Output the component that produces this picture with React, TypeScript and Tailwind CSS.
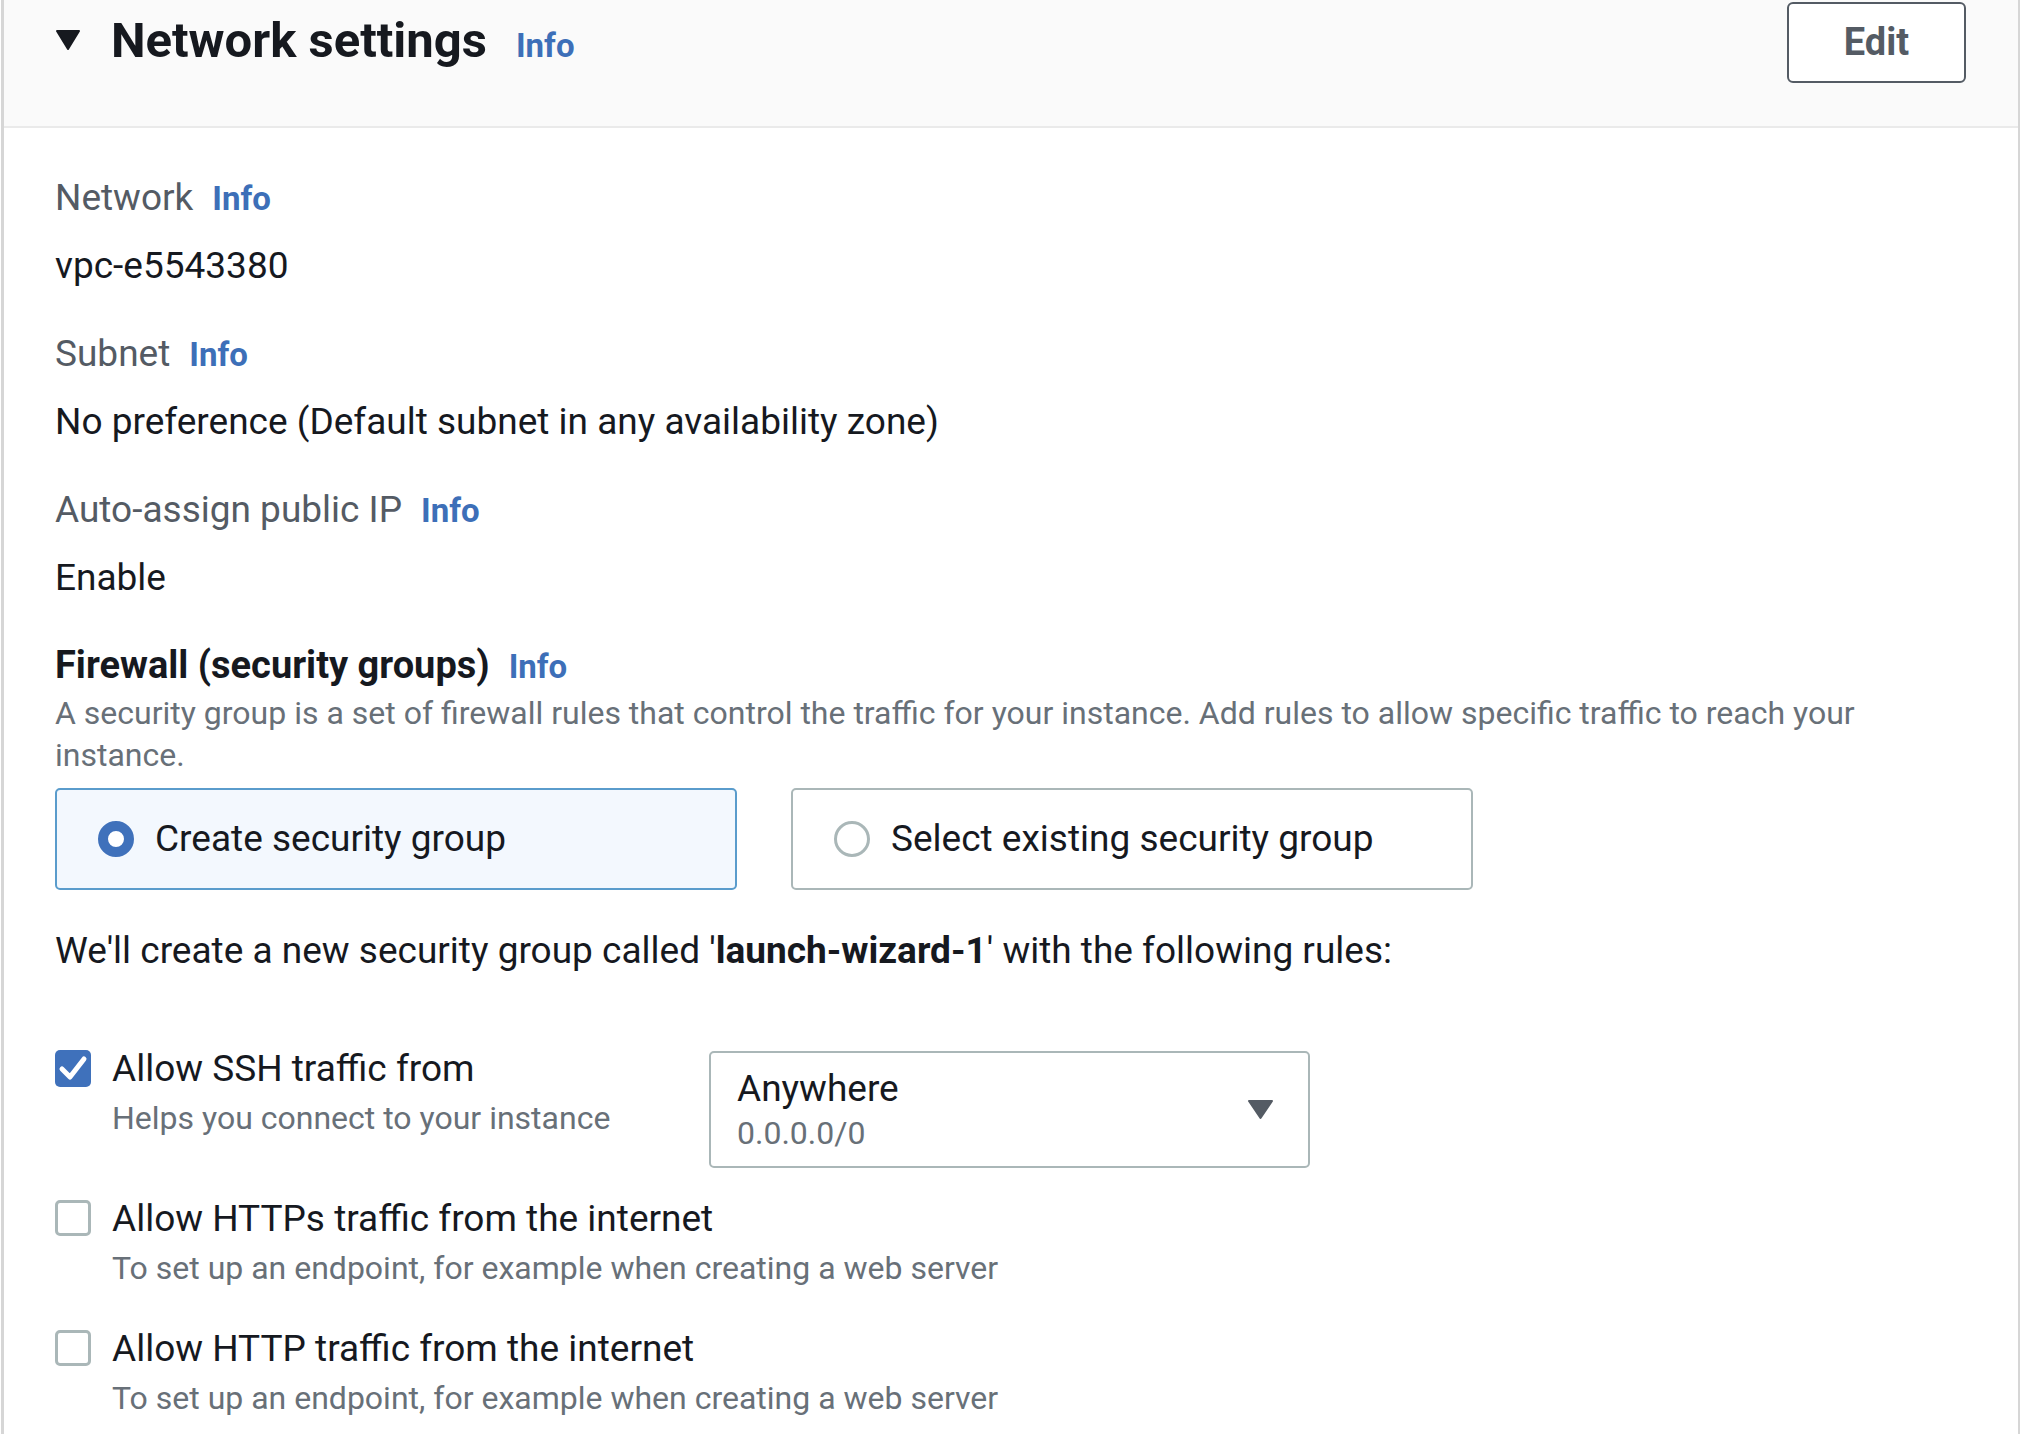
const Info = ({ className = "ml-[19px]" }: { className?: string }) => (
  <span className={`${className} text-[33px] font-bold text-[#3d6fb8]`}>Info</span>
);

function Field({ label, value, first }: { label: string; value: string; first?: boolean }) {
  return (
    <div className={first ? "" : "mt-[37px]"}>
      <div className="text-[37px] leading-[51px] text-[#545b64]">
        {label}
        <Info />
      </div>
      <div className="mt-[16px] text-[37px] leading-[51px] text-[#16191f]">{value}</div>
    </div>
  );
}

function Checkbox({ checked }: { checked?: boolean }) {
  if (checked) {
    return (
      <div className="flex h-[37px] w-9 shrink-0 items-center justify-center rounded-[5px] bg-[#3f71bb]">
        <svg width="36" height="37" viewBox="0 0 36 37">
          <polyline points="7,19 15,27 29,9" fill="none" stroke="#fff" strokeWidth="5" strokeLinecap="round" strokeLinejoin="round" />
        </svg>
      </div>
    );
  }
  return <div className="h-[36px] w-9 shrink-0 rounded-[5px] border-[3px] border-[#aab7b8] bg-white" />;
}

function Rule({ checked, title, hint, className, children }: { checked?: boolean; title: string; hint: string; className: string; children?: React.ReactNode }) {
  return (
    <div className={`flex items-start ${className}`}>
      <div className={`flex shrink-0 items-start ${children ? "w-[654px]" : ""}`}>
        <div className="mt-[7px]">
          <Checkbox checked={checked} />
        </div>
        <div className="ml-[21px]">
          <div className="text-[37px] leading-[51px] text-[#16191f]">{title}</div>
          <div className="mt-[3px] text-[32px] leading-[42px] text-[#687078]">{hint}</div>
        </div>
      </div>
      {children}
    </div>
  );
}

export default function App() {
  return (
    <div className="min-h-screen bg-white font-[Roboto,sans-serif]">
      <div className="ml-px mr-[4px] border-l-[3px] border-r-2 border-[#d6d6d6]">
        {/* header */}
        <div className="flex h-[128px] items-start justify-between border-b-2 border-[#eaeaea] bg-[#fafafa] pl-[51px] pr-[52px] pt-[2px]">
          <div className="flex items-start">
            <svg width="26" height="22" viewBox="0 0 26 22" className="mt-[27px]">
              <path d="M2 2 H24 L13 20 Z" fill="#16191f" stroke="#16191f" strokeWidth="2" strokeLinejoin="round" />
            </svg>
            <h2 className="ml-[30px] mt-[11px] text-[49px] font-bold leading-[56px] text-[#16191f]">
              Network settings
              <Info className="ml-[29px]" />
            </h2>
          </div>
          <button className="h-[81px] w-[179px] rounded-[6px] border-2 border-[#545b64] bg-white text-[38px] font-bold text-[#545b64]">
            Edit
          </button>
        </div>

        {/* body */}
        <div className="pb-[40px] pl-[51px] pr-[52px] pt-[44px]">
          <Field first label="Network" value="vpc-e5543380" />
          <Field label="Subnet" value="No preference (Default subnet in any availability zone)" />
          <Field label="Auto-assign public IP" value="Enable" />

          <div className="mt-[37px] text-[38px] font-bold leading-[51px] text-[#16191f]">
            Firewall (security groups)
            <Info className="ml-[19px]" />
          </div>
          <p className="max-w-[1860px] text-[32px] leading-[42px] text-[#687078]">
            A security group is a set of firewall rules that control the traffic for your instance. Add rules to allow specific traffic to reach your instance.
          </p>

          <div className="mt-[12px] flex gap-[54px]">
            <div className="flex h-[102px] w-[682px] items-center rounded-[5px] border-2 border-[#5a9ccc] bg-[#f3f8fe] pl-[41px]">
              <div className="h-9 w-9 rounded-full border-[10px] border-[#3f71bb] bg-white" />
              <span className="ml-[21px] text-[37px] text-[#16191f]">Create security group</span>
            </div>
            <div className="flex h-[102px] w-[682px] items-center rounded-[5px] border-2 border-[#aab7b8] bg-white pl-[41px]">
              <div className="h-9 w-9 rounded-full border-[3px] border-[#aab7b8] bg-white" />
              <span className="ml-[21px] text-[37px] text-[#16191f]">Select existing security group</span>
            </div>
          </div>

          <div className="mt-[35px] text-[37px] leading-[51px] text-[#16191f]">
            We'll create a new security group called '<b className="font-bold">launch-wizard-1</b>' with the following rules:
          </div>

          <Rule checked className="mt-[67px]" title="Allow SSH traffic from" hint="Helps you connect to your instance">
            <div className="mt-[8px] flex h-[117px] w-[601px] items-center justify-between rounded-[5px] border-2 border-[#aab7b8] pl-[26px] pr-[34px]">
              <div>
                <div className="text-[37px] leading-[44px] text-[#16191f]">Anywhere</div>
                <div className="mt-[3px] text-[32px] leading-[38px] text-[#687078]">0.0.0.0/0</div>
              </div>
              <svg width="27" height="21" viewBox="0 0 27 21">
                <path d="M2 2 H25 L13.5 19 Z" fill="#545b64" stroke="#545b64" strokeWidth="2" strokeLinejoin="round" />
              </svg>
            </div>
          </Rule>
          <Rule className="mt-[25px]" title="Allow HTTPs traffic from the internet" hint="To set up an endpoint, for example when creating a web server" />
          <Rule className="mt-[34px]" title="Allow HTTP traffic from the internet" hint="To set up an endpoint, for example when creating a web server" />
        </div>
      </div>
    </div>
  );
}
